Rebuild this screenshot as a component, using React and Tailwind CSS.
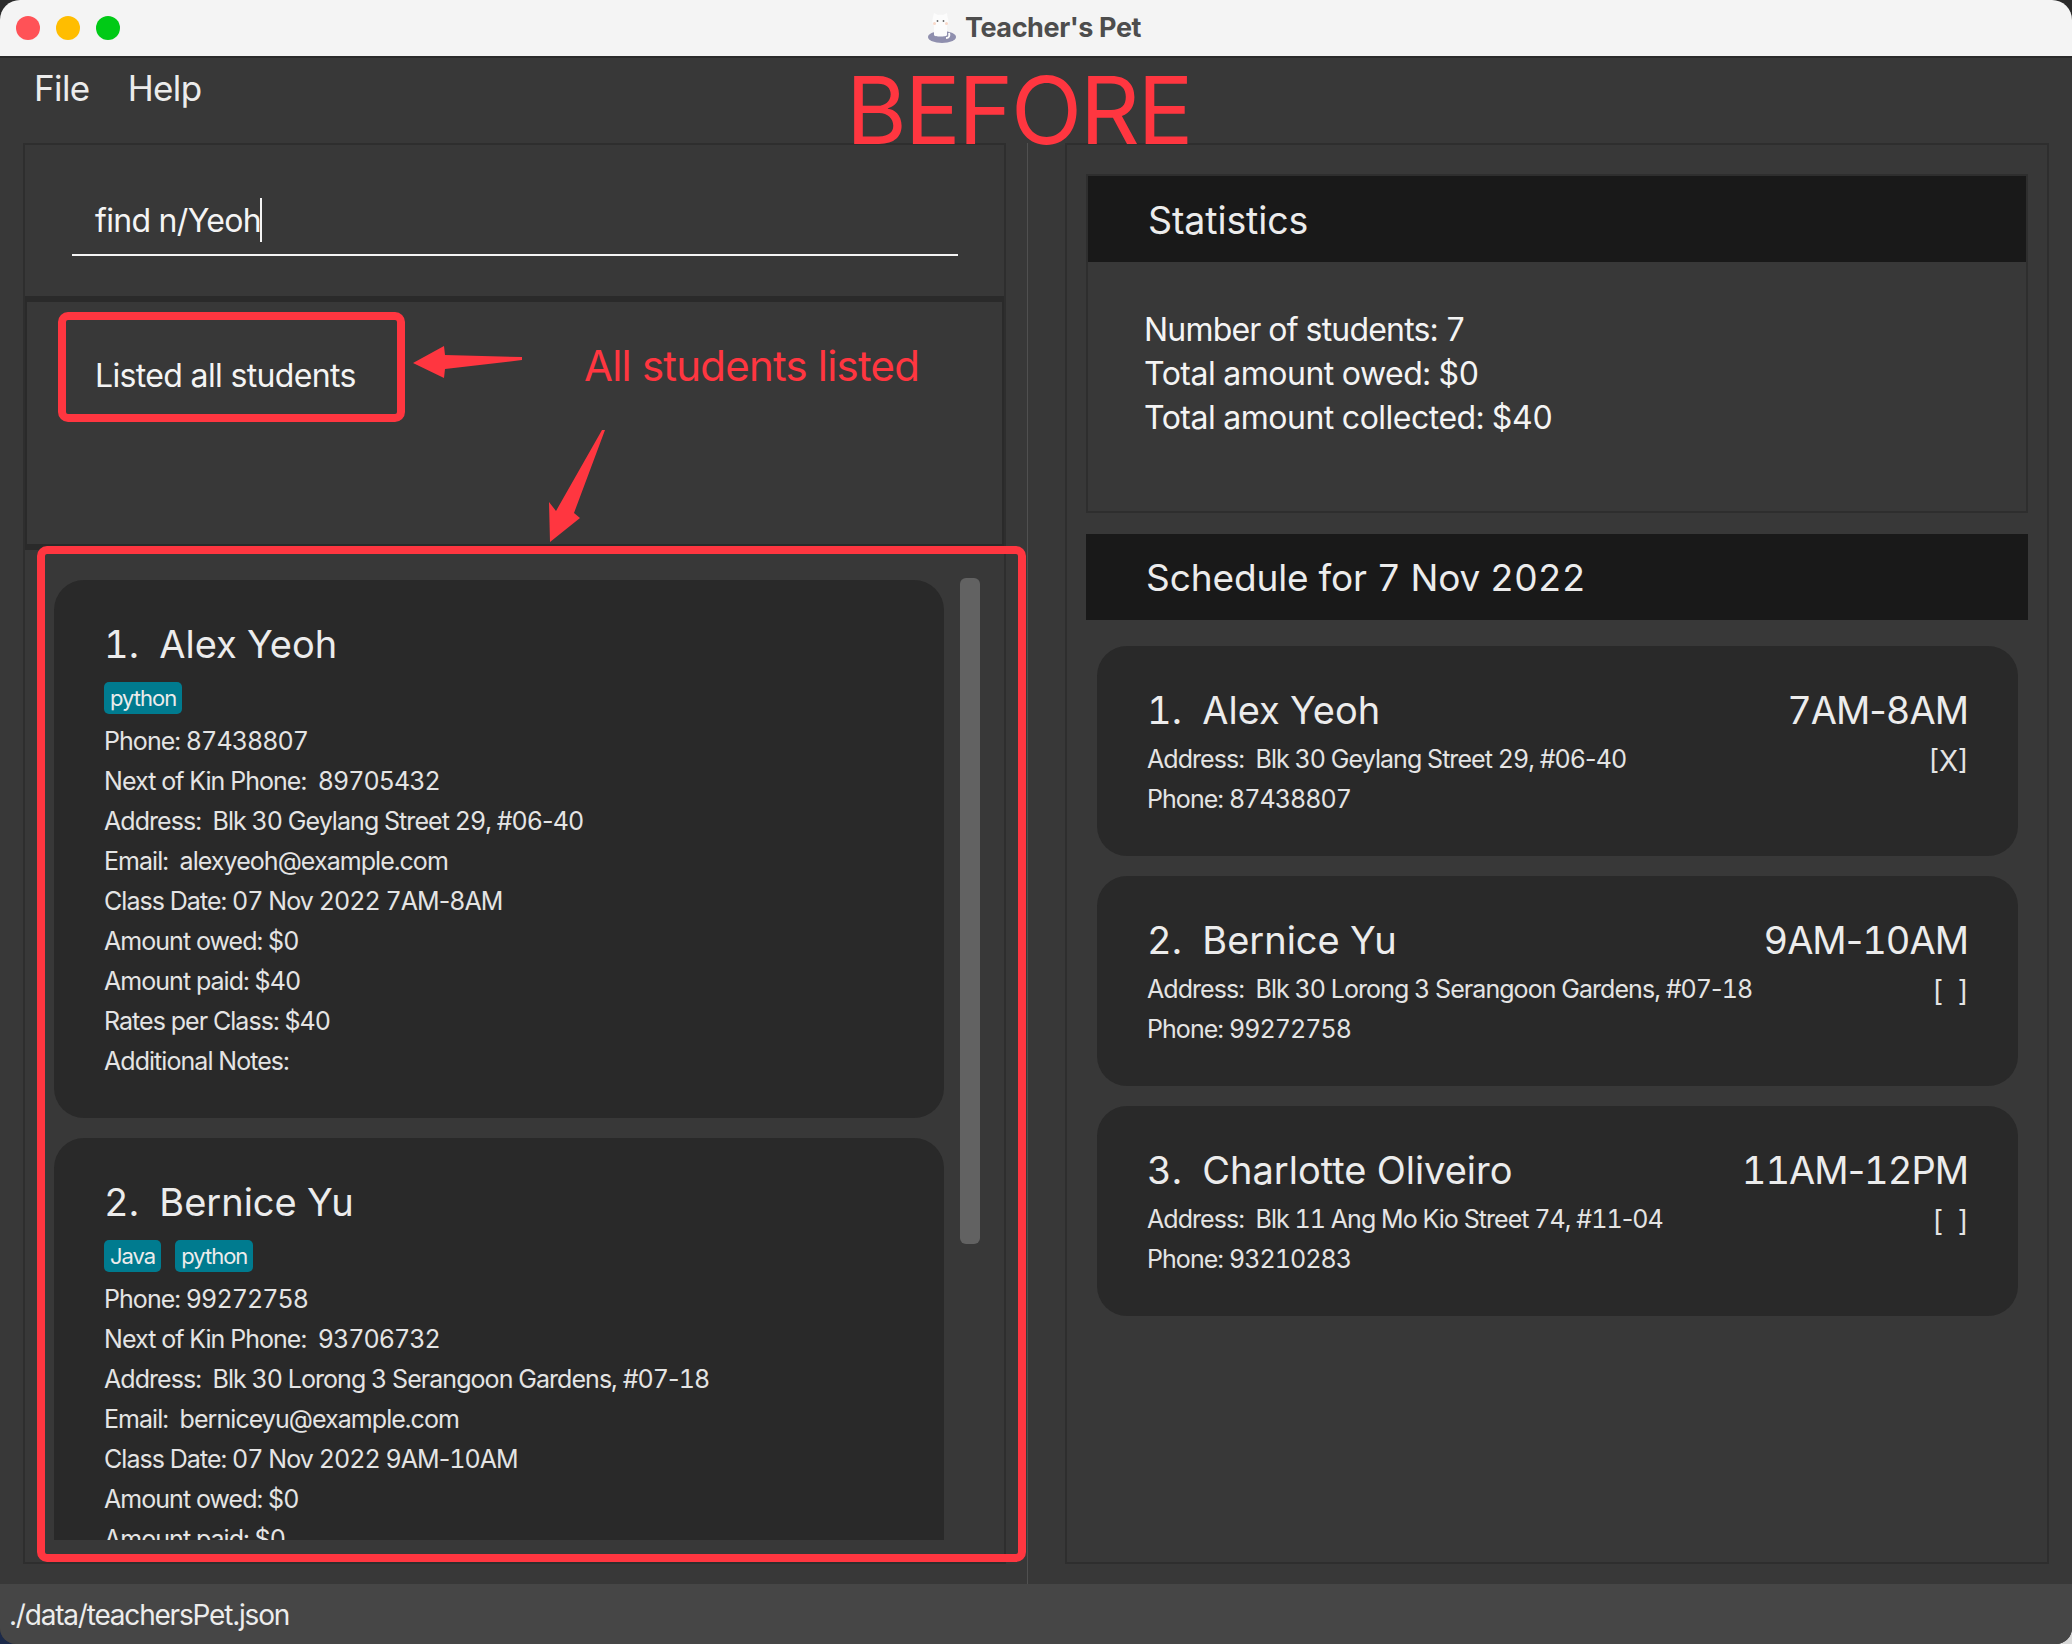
const students = [
  {
    name: 'Alex Yeoh',
    tags: ['python'],
    lines: [
      'Phone: 87438807',
      'Next of Kin Phone:  89705432',
      'Address:  Blk 30 Geylang Street 29, #06-40',
      'Email:  alexyeoh@example.com',
      'Class Date: 07 Nov 2022 7AM-8AM',
      'Amount owed: $0',
      'Amount paid: $40',
      'Rates per Class: $40',
      'Additional Notes:',
    ],
  },
  {
    name: 'Bernice Yu',
    tags: ['Java', 'python'],
    lines: [
      'Phone: 99272758',
      'Next of Kin Phone:  93706732',
      'Address:  Blk 30 Lorong 3 Serangoon Gardens, #07-18',
      'Email:  berniceyu@example.com',
      'Class Date: 07 Nov 2022 9AM-10AM',
      'Amount owed: $0',
      'Amount paid: $0',
      'Rates per Class: $40',
      'Additional Notes:',
    ],
  },
]

const schedule = [
  { name: 'Alex Yeoh', time: '7AM-8AM', mark: '[X]', address: 'Blk 30 Geylang Street 29, #06-40', phone: '87438807' },
  { name: 'Bernice Yu', time: '9AM-10AM', mark: '[  ]', address: 'Blk 30 Lorong 3 Serangoon Gardens, #07-18', phone: '99272758' },
  { name: 'Charlotte Oliveiro', time: '11AM-12PM', mark: '[  ]', address: 'Blk 11 Ang Mo Kio Street 74, #11-04', phone: '93210283' },
]

// tabular digits, but Inter's tabular hyphen is far too wide
function Nums({ text }) {
  const parts = text.split('-')
  return parts.map((part, i) => (
    <span key={i}>
      {i > 0 && <span className="normal-nums">-</span>}
      {part}
    </span>
  ))
}

function StudentCard({ index, student }) {
  return (
    <div className="shrink-0 h-[538px] rounded-[30px] bg-[#292929] pl-[50px] pt-[40px]">
      <div className="h-[48px] leading-[48px] text-[38px] tabular-nums text-[#ececec] whitespace-pre">
        {index}.  {student.name}
      </div>
      <div className="flex gap-[14px] mt-[14px] mb-[7px]">
        {student.tags.map((tag) => (
          <span key={tag} className="h-[32px] leading-[32px] px-[6px] rounded-[5px] bg-[#007b8f] text-[22px] tracking-[-1px] text-[#ececec]">
            {tag}
          </span>
        ))}
      </div>
      {student.lines.map((line) => (
        <div key={line} className="h-[40px] leading-[40px] text-[25px] tabular-nums tracking-[-0.95px] text-[#e4e4e4] whitespace-pre">
          <Nums text={line} />
        </div>
      ))}
    </div>
  )
}

function ScheduleCard({ index, item }) {
  return (
    <div className="h-[210px] rounded-[30px] bg-[#292929] pl-[50px] pr-[50px] pt-[40px]">
      <div className="flex justify-between h-[48px] leading-[48px] text-[38px] tabular-nums text-[#ececec] whitespace-pre">
        <span>{index}.  {item.name}</span>
        <span className="tracking-[-1px]"><Nums text={item.time} /></span>
      </div>
      <div className="flex justify-between h-[40px] leading-[40px] mt-[5px] text-[25px] tabular-nums tracking-[-0.95px] text-[#e4e4e4] whitespace-pre">
        <span>Address:  <Nums text={item.address} /></span>
        <span className="-mr-[1px] text-[28px] leading-[44px] tracking-normal">{item.mark}</span>
      </div>
      <div className="h-[40px] leading-[40px] text-[25px] tabular-nums tracking-[-0.95px] text-[#e4e4e4]">Phone: {item.phone}</div>
    </div>
  )
}

function Annotations() {
  return (
    <>
      <div className="absolute left-[58px] top-[312px] w-[347px] h-[110px] border-[8px] border-[#ff3640] rounded-[10px]" />
      <div className="absolute left-[37px] top-[546px] w-[989px] h-[1016px] border-[8px] border-[#ff3640] rounded-[10px]" />
      <svg className="absolute left-0 top-0" width="2072" height="1644" fill="#ff3640">
        <path d="M413 363 L444 346 L445 355 L522 357 L522 360 L445 369 L444 378 Z" />
        <path d="M602 430 L605 430 L574 513 L580 518 L550 542 L549 502 L556 511 Z" />
      </svg>
      <div className="absolute left-[584px] top-[336px] leading-[60px] text-[42px] tracking-[-0.8px] text-[#ff3640] whitespace-nowrap">All students listed</div>
      <div className="absolute left-[846px] top-[48px] leading-[124px] text-[93px] tracking-[-2.2px] text-[#ff3640] whitespace-nowrap">BEFORE</div>
    </>
  )
}

export default function App() {
  return (
    <div className="relative w-[2072px] h-[1644px] bg-[#2b2b2b] font-['Inter','Noto_Sans',sans-serif] overflow-hidden">
      <div className="absolute left-0 bottom-0 w-[24px] h-[24px] bg-[#1c2a4a]" />
      <div className="absolute right-0 bottom-0 w-[24px] h-[24px] bg-[#d8d8d8]" />
      <div className="relative flex flex-col h-full rounded-t-[20px] rounded-b-[16px] overflow-hidden bg-[#383838]">
        {/* title bar */}
        <div className="relative flex items-center justify-center h-[58px] shrink-0 bg-[#f4f4f4] border-b-2 border-[#2a2a2a]">
          <div className="absolute left-[16px] top-[16px] flex gap-[16px]">
            <span className="w-[24px] h-[24px] rounded-full bg-[#ff5257]" />
            <span className="w-[24px] h-[24px] rounded-full bg-[#ffbd00]" />
            <span className="w-[24px] h-[24px] rounded-full bg-[#00ca16]" />
          </div>
          <svg className="mr-[8px] ml-[-4px]" width="30" height="32" viewBox="0 0 30 32">
            <ellipse cx="15" cy="25" rx="14" ry="6" fill="#8f8fae" />
            <path d="M6 5 L7 1 L11 3 C12 2.5 15 2.5 16 3 L20 1 L20.5 5 C22 8 22 12 20 14 L20 23 C20 25 7 25 7 23 L7 14 C5 12 5 8 6 5 Z" fill="#fcfcfc" />
            <circle cx="10.5" cy="9" r="0.9" fill="#666" />
            <circle cx="16.5" cy="9" r="0.9" fill="#666" />
            <circle cx="7.5" cy="11.5" r="1.5" fill="#f8d8c8" />
            <circle cx="19.5" cy="11.5" r="1.5" fill="#f8d8c8" />
            <path d="M19 26 C22 26 23 24 22 21" fill="none" stroke="#fcfcfc" strokeWidth="2" />
          </svg>
          <span className="text-[27px] leading-[32px] font-bold tracking-[-0.4px] text-[#4d4d4d]">Teacher's Pet</span>
        </div>

        {/* menu */}
        <div className="flex gap-[38px] h-[85px] shrink-0 pl-[34px] pt-[6px] text-[35px] leading-[48px] tracking-[-0.6px] text-[#ececec]">
          <span>File</span>
          <span>Help</span>
        </div>

        <div className="flex flex-1 min-h-0">
          {/* left side */}
          <div className="flex flex-col w-[1028px] shrink-0 pl-[23px] pr-[21px] pb-[20px] border-r border-[#505050]">
            <div className="flex flex-col flex-1 min-h-0 border-2 border-[#2e2e2e]">
              <div className="relative h-[151px] shrink-0 pt-[54px] pl-[70px]">
                <div className="text-[32px] leading-[44px] tracking-[-0.7px] text-[#f4f4f4] whitespace-pre">find n/Yeoh</div>
                <div className="absolute left-[47px] top-[109px] w-[886px] h-[2px] bg-[#f4f4f4]" />
                <div className="absolute left-[235px] top-[53px] w-[2px] h-[44px] bg-[#f4f4f4]" />
              </div>
              <div className="h-[254px] shrink-0 border-y-[6px] border-x-2 border-[#2a2a2a] pl-[68px] pt-[52px] text-[32px] leading-[44px] tracking-[-0.65px] text-[#f4f4f4]">
                Listed all students
              </div>
              <div className="flex flex-1 min-h-0 pl-[29px] pt-[30px] pb-[22px]">
                <div className="flex flex-col gap-[20px] w-[890px] shrink-0 overflow-hidden">
                  {students.map((student, i) => (
                    <StudentCard key={student.name} index={i + 1} student={student} />
                  ))}
                </div>
                <div className="w-[20px] h-[666px] ml-[16px] -mt-[2px] rounded-[6px] bg-[#626262]" />
              </div>
            </div>
          </div>

          {/* right side */}
          <div className="flex-1 min-w-0 pl-[37px] pr-[23px] pb-[20px]">
            <div className="h-full border-2 border-[#2e2e2e] pl-[19px] pr-[19px] pt-[29px]">
              <div className="h-[339px] border-2 border-[#2e2e2e]">
                <div className="h-[86px] bg-[#191919] pl-[60px] text-[37.5px] leading-[90px] tracking-[-0.1px] text-[#ececec]">Statistics</div>
                <div className="pl-[56px] pt-[46px] text-[32px] leading-[44px] tabular-nums tracking-[-0.5px] text-[#f4f4f4]">
                  <div className="tracking-[-0.8px]">Number of students: 7</div>
                  <div>Total amount owed: $0</div>
                  <div>Total amount collected: $40</div>
                </div>
              </div>
              <div className="h-[86px] mt-[21px] bg-[#191919] pl-[60px] text-[37px] leading-[88px] tabular-nums tracking-[-0.1px] text-[#ececec]">Schedule for 7 Nov 2022</div>
              <div className="flex flex-col gap-[20px] mt-[26px] ml-[11px] mr-[10px]">
                {schedule.map((item, i) => (
                  <ScheduleCard key={item.name} index={i + 1} item={item} />
                ))}
              </div>
            </div>
          </div>
        </div>

        {/* status bar */}
        <div className="h-[60px] shrink-0 bg-[#464646] pl-[9px] text-[28px] leading-[62px] tracking-[-1.2px] text-[#ececec]">./data/teachersPet.json</div>
      </div>
      <Annotations />
    </div>
  )
}
